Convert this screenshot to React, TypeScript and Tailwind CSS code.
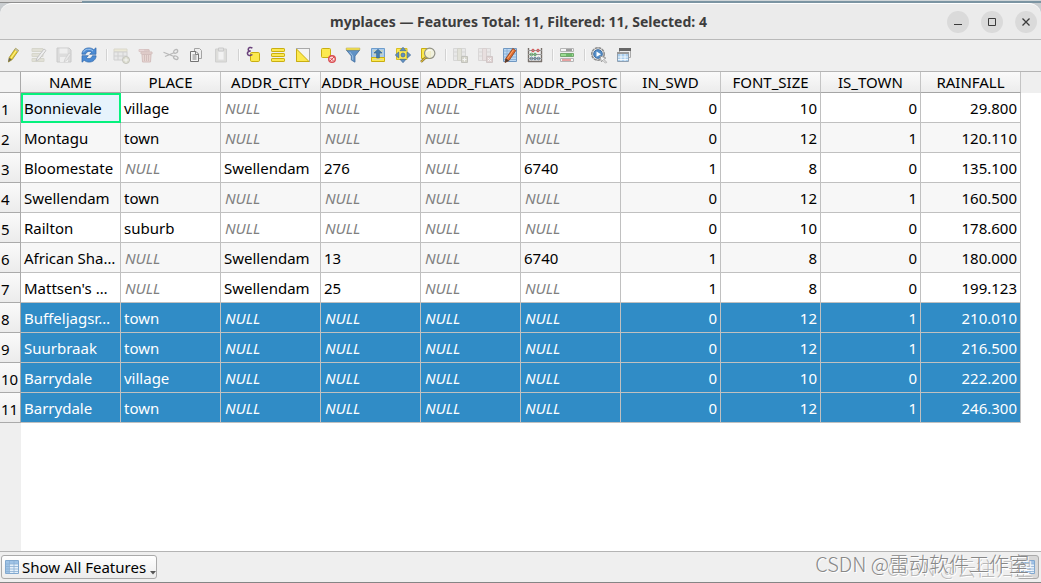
import React from "react";

type Cell = string | null;

const columns = [
  "NAME", "PLACE", "ADDR_CITY", "ADDR_HOUSE", "ADDR_FLATS",
  "ADDR_POSTC", "IN_SWD", "FONT_SIZE", "IS_TOWN", "RAINFALL",
];

const rows: Cell[][] = [
  ["Bonnievale", "village", null, null, null, null, "0", "10", "0", "29.800"],
  ["Montagu", "town", null, null, null, null, "0", "12", "1", "120.110"],
  ["Bloomestate", null, "Swellendam", "276", null, "6740", "1", "8", "0", "135.100"],
  ["Swellendam", "town", null, null, null, null, "0", "12", "1", "160.500"],
  ["Railton", "suburb", null, null, null, null, "0", "10", "0", "178.600"],
  ["African Sha…", null, "Swellendam", "13", null, "6740", "1", "8", "0", "180.000"],
  ["Mattsen's …", null, "Swellendam", "25", null, null, "1", "8", "0", "199.123"],
  ["Buffeljagsr…", "town", null, null, null, null, "0", "12", "1", "210.010"],
  ["Suurbraak", "town", null, null, null, null, "0", "12", "1", "216.500"],
  ["Barrydale", "village", null, null, null, null, "0", "10", "0", "222.200"],
  ["Barrydale", "town", null, null, null, null, "0", "12", "1", "246.300"],
];

const firstSelected = 7;
const firstNumeric = 6;

function Tool({ label, disabled, children }: { label: string; disabled?: boolean; children: React.ReactNode }) {
  return (
    <button type="button" aria-label={label} disabled={disabled} className="size-4 shrink-0 disabled:opacity-35">
      <svg viewBox="0 0 16 16" className="size-4 overflow-visible" fill="none">{children}</svg>
    </button>
  );
}

function Group({ children }: { children: React.ReactNode }) {
  return <div className="flex items-center gap-[9px]">{children}</div>;
}

function Separator() {
  return <div className="mr-1.5 ml-[9px] h-3 w-px bg-[#d2d2d2] shadow-[1px_0_0_#fafafa]" />;
}

const yellow = { fill: "#fce94f", stroke: "#c9ae10" };

function Toolbar() {
  return (
    <div role="toolbar" className="flex h-8 items-center border-b border-[#b4b4b4] bg-[#efefef] pb-px pl-1.5">
      <Group>
        <Tool label="Toggle editing">
          <path d="M3.2 10.5 9.5 1.3 12.6 3.4 6.2 12.6 2.4 15z" fill="#e8cf2c" stroke="#9a8b33" strokeWidth=".8" />
          <path d="M5 11 11 2.5" stroke="#fff08a" strokeWidth="1.2" />
          <path d="M9.5 1.3 12.6 3.4 11.7 4.7 8.6 2.6z" fill="#b9b9a8" />
          <path d="M3.2 10.7 2.2 15 5.8 12.5z" fill="#6a675b" />
        </Tool>
        <Tool label="Multi edit" disabled>
          <path d="M1 1.5h11v3H1zM1 6.5h11v3H1zM1 11.5h12v3H1z" fill="#c9c7a8" stroke="#aaa88d" />
          <path d="m6 11 7-9 2 1.5-7 9L5 14z" fill="#eee" stroke="#777" />
        </Tool>
        <Tool label="Save edits" disabled>
          <path d="M1 1h12l2 2v12H1z" fill="#bbb" stroke="#888" />
          <path d="M3.5 1.5h8v5h-8zM4 10h8v5H4z" fill="#eee" />
          <path d="m9 12 4-6 2 1-4 6-3 2z" fill="#ddd" stroke="#888" strokeWidth=".7" />
        </Tool>
        <Tool label="Reload table">
          <path d="M.9 7.2C1 3.5 4 .9 7.8.9c2 0 3.8.7 5 1.8L15 .8v6.5H8.6l2-2C9 3.8 5.6 4 4.6 7.2z" fill="#4b8bd4" stroke="#2e65a9" strokeWidth=".7" />
          <path d="M15.1 8.8c-.1 3.7-3.1 6.3-6.9 6.3-2 0-3.8-.7-5-1.8L1 15.2V8.7h6.4l-2 2c1.6 1.5 5 1.3 6-1.9z" fill="#4b8bd4" stroke="#2e65a9" strokeWidth=".7" />
          <path d="M2.4 5.3c1.3-3.4 6.6-4.2 9.6-1.2" stroke="#a3c9f0" />
        </Tool>
      </Group>
      <Separator />
      <Group>
        <Tool label="Add feature" disabled>
          <path d="M1 2h13v3H1z" fill="#e6dfad" stroke="#b4ad8a" />
          <path d="M1 5h13v8H1zM1 9h13M5 5v8M10 5v8" fill="#ddd" stroke="#999" />
          <circle cx="13" cy="13" r="3.5" fill="#b8b990" stroke="#777764" />
          <path d="M13 10.5v5M10.5 13h5" stroke="#fff" />
        </Tool>
        <Tool label="Delete selected" disabled>
          <path d="M1 2.5h10v2H1z" fill="#ddaeae" stroke="#b57e7e" />
          <path d="M3 5h11v2H3zM4 7.5h9l-.5 7.5h-8zM6 3h5v2M6.5 8v6M8.5 8v6M10.5 8v6" fill="#dba89f" stroke="#a26862" />
        </Tool>
        <Tool label="Cut selected rows" disabled>
          <path d="M.5 5.2 11 9.5M2 9.5l9-3.8" stroke="#555" strokeWidth="1.2" />
          <ellipse cx="12.7" cy="4.4" rx="2.2" ry="1.6" transform="rotate(-35 12.7 4.4)" stroke="#555" strokeWidth="1.3" />
          <ellipse cx="12.8" cy="10.7" rx="2.3" ry="1.6" transform="rotate(25 12.8 10.7)" stroke="#555" strokeWidth="1.3" />
        </Tool>
        <Tool label="Copy selected rows">
          <path d="M6.5 1.5h5l2 2v8h-7z" fill="#eee" stroke="#a4a4a4" />
          <path d="M2.5 4.5H8l2.5 2.5v7.5h-8z" fill="#f4f4f4" stroke="#747474" />
          <path d="M7.5 4.5V7.5h3M4.5 8h4M4.5 10h4M4.5 12h4" stroke="#858585" />
        </Tool>
        <Tool label="Paste features" disabled>
          <path d="M2.5 2h11v13h-11z" fill="#b9b9b1" stroke="#999" />
          <path d="M5 4h6v9H5z" fill="#f8f8f8" stroke="#c4c4c4" />
          <path d="M5.5 1h5v3h-5z" fill="#ccc" stroke="#888" />
        </Tool>
      </Group>
      <Separator />
      <Group>
        <Tool label="Select by expression">
          <rect x="5.5" y="5.5" width="9" height="9" rx="1.2" {...yellow} />
          <path d="M7.4 1.1C5.7-.1 3.2.5 3.2 2.4c0 1.2 1 1.7 2.5 1.7C3.8 4.2 2.4 5 2.4 6.5c0 2.2 3 2.6 5 1" stroke="#6a427c" strokeWidth="1.5" />
        </Tool>
        <Tool label="Select all">
          <rect x="1.5" y="1.5" width="13" height="3" rx=".6" {...yellow} />
          <rect x="1.5" y="6.5" width="13" height="3" rx=".6" {...yellow} />
          <rect x="1.5" y="11.5" width="13" height="3" rx=".6" {...yellow} />
        </Tool>
        <Tool label="Invert selection">
          <rect x="1.5" y="1.5" width="13" height="13" fill="#f4f4f4" stroke="#a9a9a9" />
          <path d="M1.5 2v12.5H14z" {...yellow} />
        </Tool>
        <Tool label="Deselect all">
          <rect x="1.5" y="1.5" width="9" height="9" rx="1" {...yellow} />
          <circle cx="12" cy="12" r="3.3" fill="#fbdede" stroke="#d94b50" strokeWidth="1.4" />
          <path d="m9.7 14.3 4.6-4.6M10.5 11l3 3" stroke="#d94b50" />
        </Tool>
        <Tool label="Filter features">
          <path d="M1.3 3h13.4L10 9v6.2L6.3 13V9z" fill="#5f91c5" stroke="#416d9e" strokeWidth=".8" />
          <path d="M1.2 1h13.6v2H1.2z" fill="#fce94f" stroke="#b7aa50" strokeWidth=".6" />
          <path d="m4.7 5 3 3.8v4" stroke="#9fc2e4" />
        </Tool>
        <Tool label="Move selection to top">
          <path d="M1.5 1.5h13v9h-13z" fill="#a9cbed" stroke="#6e9dcc" />
          <path d="M1.5 10.5h13v4h-13z" {...yellow} />
          <path d="M3 4h10M3 7h10M3 12.5h10" stroke="#ded899" />
          <path d="M8 2.3 12 6H9.4v5H6.6V6H4z" fill="#457dae" stroke="#315f8b" strokeWidth=".6" />
        </Tool>
        <Tool label="Pan map to selected rows">
          <path d="M1.5 1.500h10.500v11H1.500z" fill="#fce94f" stroke="#d8be23" />
          <path d="m8 .3 3 3.400H5zM8 15.700l3-3.400H5zM.3 8l3.400-3v6zM15.700 8l-3.400-3v6z" fill="#6291c2" stroke="#3f6897" strokeWidth=".7" />
          <circle cx="8" cy="8" r="2" fill="#6291c2" stroke="#3f6897" strokeWidth=".7" />
        </Tool>
        <Tool label="Zoom map to selected rows">
          <path d="M1.5 1.5h9v10h-9z" {...yellow} />
          <path d="m1 14.8 5-4.7" stroke="#7f7340" strokeWidth="2.5" />
          <path d="m1 14.8 5-4.7" stroke="#e4bd32" strokeWidth="1.1" />
          <circle cx="9.7" cy="6.3" r="5.2" fill="#f1f1dc" fillOpacity=".9" stroke="#929287" strokeWidth="1.2" />
          <path d="M6.5 5.2c.8-2.2 3.5-2.8 5-1.4" stroke="#fff" />
        </Tool>
      </Group>
      <Separator />
      <Group>
        <Tool label="New field" disabled>
          <path d="M1.5 1.5h12v12h-12zM5.5 1.5v12M9.5 1.5v12M2 5h11M2 9h11" fill="#ddd" stroke="#aaa" />
          <path d="M5.5 1.5h4v12h-4z" fill="#c9caae" stroke="#9d9d8b" />
          <path d="M9.5 9.5h6v6h-6z" fill="#aaa88e" stroke="#717160" />
          <path d="M12.5 10.5v4M10.5 12.5h4" stroke="#fff" />
        </Tool>
        <Tool label="Delete field" disabled>
          <path d="M1.5 1.5h12v12h-12zM5.5 1.5v12M9.5 1.5v12M2 5h11M2 9h11" fill="#e2dddd" stroke="#b1abab" />
          <path d="M5.5 1.5h4v12h-4z" fill="#ddc4c4" stroke="#b09898" />
          <path d="M9.5 9.5h6v6h-6z" fill="#c5a1a1" stroke="#9a8080" />
          <path d="m11 11 3 3m0-3-3 3" stroke="#fff" />
        </Tool>
        <Tool label="Organize columns">
          <path d="M1.5 1.5h13v13h-13z" fill="#bcd8f2" stroke="#7098c2" />
          <path d="M2 4h12M2 7h12M2 10h12M2 12.5h12M5 2v12" stroke="#80aad4" strokeWidth=".8" />
          <path d="m3.8 11.5 7-10 3 2-6.8 10-4 2z" fill="#df6c30" stroke="#843e20" strokeWidth=".8" />
          <path d="m5.5 11.5 6-8.7" stroke="#ffad72" />
          <path d="m3.8 11.5-.7 4 3.8-2z" fill="#4c3a2e" />
        </Tool>
        <Tool label="Field calculator">
          <path d="M1.5 1v14M14.5 1v14M1 14.5h14" stroke="#77706b" strokeWidth="1.4" />
          <path d="M1 3.5h14M1 7.5h14M1 11.5h14" stroke="#999" />
          <g stroke="#d04d4d"><circle cx="6" cy="3.5" r="1.3" /><circle cx="11" cy="3.5" r="1.3" /></g>
          <g stroke="#55a862"><circle cx="4.5" cy="7.5" r="1.3" /><circle cx="8" cy="7.5" r="1.3" /></g>
          <g stroke="#587e98"><circle cx="4.5" cy="11.5" r="1.3" /><circle cx="8" cy="11.5" r="1.3" /><circle cx="11.5" cy="11.5" r="1.3" /></g>
        </Tool>
      </Group>
      <Separator />
      <Group>
        <Tool label="Conditional formatting">
          <path d="M1.5 1.5h13v3h-13zM1.5 11.5h13v3h-13z" fill="#f5f5f5" stroke="#b5b5b5" />
          <path d="M1.5 6.5h13v3h-13z" fill="#9bdc91" stroke="#75a76e" />
          <path d="M7 3h6" stroke="#444" /><path d="M7 8h6" stroke="#3e9344" /><path d="M3 13h9" stroke="#d64c4c" />
        </Tool>
      </Group>
      <Separator />
      <Group>
        <Tool label="Actions">
          <circle cx="7" cy="7" r="6.2" fill="#e8e8e8" stroke="#8a8a8a" strokeWidth="1.5" strokeDasharray="3 .6" />
          <circle cx="7" cy="7" r="4.3" fill="#558fc9" stroke="#3b6da4" />
          <path d="m5.5 4.5 4.5 2.7-4.5 2.5z" fill="#fff" />
          <path d="m9 9 6 2-2.4 1.2 3 3-1 1-3-3L10.5 15z" fill="#f7f7f7" stroke="#888" strokeWidth=".7" />
        </Tool>
        <Tool label="Dock attribute table">
          <path d="M3.5 1.5h11v9h-11z" fill="#eee" stroke="#aaa" />
          <path d="M3 1h12v3H3z" fill="#676767" />
          <path d="M1.5 5.5h11v9h-11z" fill="#a9cdec" stroke="#8f9fb0" />
          <path d="M1 5h12v2H1z" fill="#999" />
          <path d="M2 10h10M2 12.5h10M5 7v7M9 7v7" stroke="#fff" strokeWidth=".8" />
        </Tool>
      </Group>
    </div>
  );
}

function TitleBar() {
  return (
    <header className="grid h-9 grid-cols-[1fr_auto_1fr] items-center rounded-t-xl border-t border-white bg-[#ebebeb] pr-1">
      <span />
      <h1 className="text-sm font-bold text-[#3d3d3d]">myplaces — Features Total: 11, Filtered: 11, Selected: 4</h1>
      <div className="flex justify-end gap-3">
        {["Minimize", "Maximize", "Close"].map((label, i) => (
          <button key={label} type="button" aria-label={label} className="size-[22px] rounded-full bg-[#dadada]">
            <svg viewBox="0 0 22 22" fill="none" stroke="#3a3a3a" className="size-[22px]">
              {i === 0 && <path d="M7 13.5h8" />}
              {i === 1 && <path d="M7.5 7.5h7v7h-7z" />}
              {i === 2 && <path d="m7.5 7.5 7 7m0-7-7 7" strokeWidth="1.3" />}
            </svg>
          </button>
        ))}
      </div>
    </header>
  );
}

function cellClass(row: number, col: number, value: Cell) {
  const selected = row >= firstSelected;
  const current = row === 0 && col === 0;
  return [
    "h-[30px] overflow-hidden border-r border-b border-[#c0c0c0] py-0 pr-[3px] whitespace-nowrap",
    col >= firstNumeric ? "text-right" : "text-left",
    selected ? "bg-[#308cc6] text-white" : current ? "bg-[#e6f3fc]" : row % 2 ? "bg-[#f7f7f7]" : "bg-white",
    value === null ? "pl-1 italic" : "pl-[3px]",
    value === null && !selected ? "text-[#808080]" : "",
    current ? "outline-2 -outline-offset-2 outline-[#06f17d]" : "",
  ].join(" ");
}

function AttributeTable() {
  return (
    <main className="flex-1 bg-[linear-gradient(to_right,#efefef_21px,#fff_21px)]">
      <table className="w-full table-fixed border-separate border-spacing-0 text-[15px] leading-5 text-black">
        <colgroup>
          <col className="w-[21px]" />
          {columns.map((c) => <col key={c} className="w-[100px]" />)}
          <col />
        </colgroup>
        <thead>
          <tr className="h-[21px]">
            <td className="border-r border-b border-[#aaa] bg-[#f3f3f3] p-0" />
            {columns.map((c) => (
              <th key={c} scope="col" className="overflow-hidden border-r border-b border-r-[#c4c4c4] border-b-[#a5a5a5] bg-linear-to-b from-[#fafafa] to-[#ececec] p-0 text-center font-normal whitespace-nowrap">
                {c}
              </th>
            ))}
            <td className="bg-[#efefef] p-0" />
          </tr>
        </thead>
        <tbody>
          {rows.map((row, r) => (
            <tr key={r}>
              <th scope="row" className="h-[30px] overflow-hidden border-r border-b border-[#aaa] bg-linear-to-b from-[#fafafa] to-[#ececec] p-0 pt-0.5 pl-px text-left font-normal">
                {r + 1}
              </th>
              {row.map((value, c) => (
                <td key={c} className={cellClass(r, c, value)}>{value ?? "NULL"}</td>
              ))}
              <td className="p-0" />
            </tr>
          ))}
        </tbody>
      </table>
    </main>
  );
}

function TableIcon() {
  return (
    <svg viewBox="0 0 14 14" fill="none" className="size-3.5 shrink-0">
      <path d="M.5.5h13v13H.5z" fill="#e5f0fa" stroke="#81a8cf" />
      <path d="M1 1h12v3H1zM1 4h3v9H1z" fill="#9fc3e6" />
      <path d="M1 4h12M1 6.5h12M1 9h12M1 11.5h12M4.5 1v12M9 1v12" stroke="#8aafd3" strokeWidth=".8" />
    </svg>
  );
}

function StatusBar() {
  return (
    <footer className="relative flex h-8 items-center justify-between border-t border-b border-t-[#b4b4b4] border-b-[#858585] bg-[#efefef] pr-0.5 pl-px">
      <button type="button" className="flex h-6 w-[156px] items-center gap-[3px] rounded-[3px] border border-[#aaa] bg-linear-to-b from-white to-[#ececec] pl-[3px] text-[15px] text-black">
        <TableIcon />
        <span className="whitespace-nowrap">Show All Features</span>
        <svg viewBox="0 0 6 4" className="mt-3 ml-auto h-1 w-1.5"><path d="M0 0h6L3 3.5z" fill="#555" /></svg>
      </button>
      <button type="button" aria-label="Switch to table view" className="flex h-6 w-[22px] items-center justify-center rounded-[3px] border border-[#aaa] bg-[#d8d8d8]">
        <TableIcon />
      </button>
      <span className="pointer-events-none absolute right-2 bottom-0 font-['Noto_Sans_CJK_SC',sans-serif] text-[19px] leading-7 font-light whitespace-nowrap text-[#b9b9b9] [text-shadow:1px_1px_0_#fff]">
        CSDN @云往归星
      </span>
      <span className="pointer-events-none absolute right-3 bottom-1 font-['Noto_Sans_CJK_SC',sans-serif] text-[20px] leading-7 font-light whitespace-nowrap text-[#888] [text-shadow:1px_1px_0_#fff]">
        CSDN @雷动软件工作室
      </span>
    </footer>
  );
}

export default function App() {
  return (
    <div className="flex min-h-screen flex-col bg-[#c9cdd0] font-['Noto_Sans',sans-serif]">
      <div className="flex h-[3px]">
        <div className="w-[82px] border-b border-[#8f8f8f] bg-[#d5d5d5]" />
        <div className="flex-1 border-b-2 border-[#7b94a2] bg-[#cfd5d8]" />
      </div>
      <TitleBar />
      <div className="border-t border-[#b9b9b9]"><Toolbar /></div>
      <AttributeTable />
      <StatusBar />
    </div>
  );
}
